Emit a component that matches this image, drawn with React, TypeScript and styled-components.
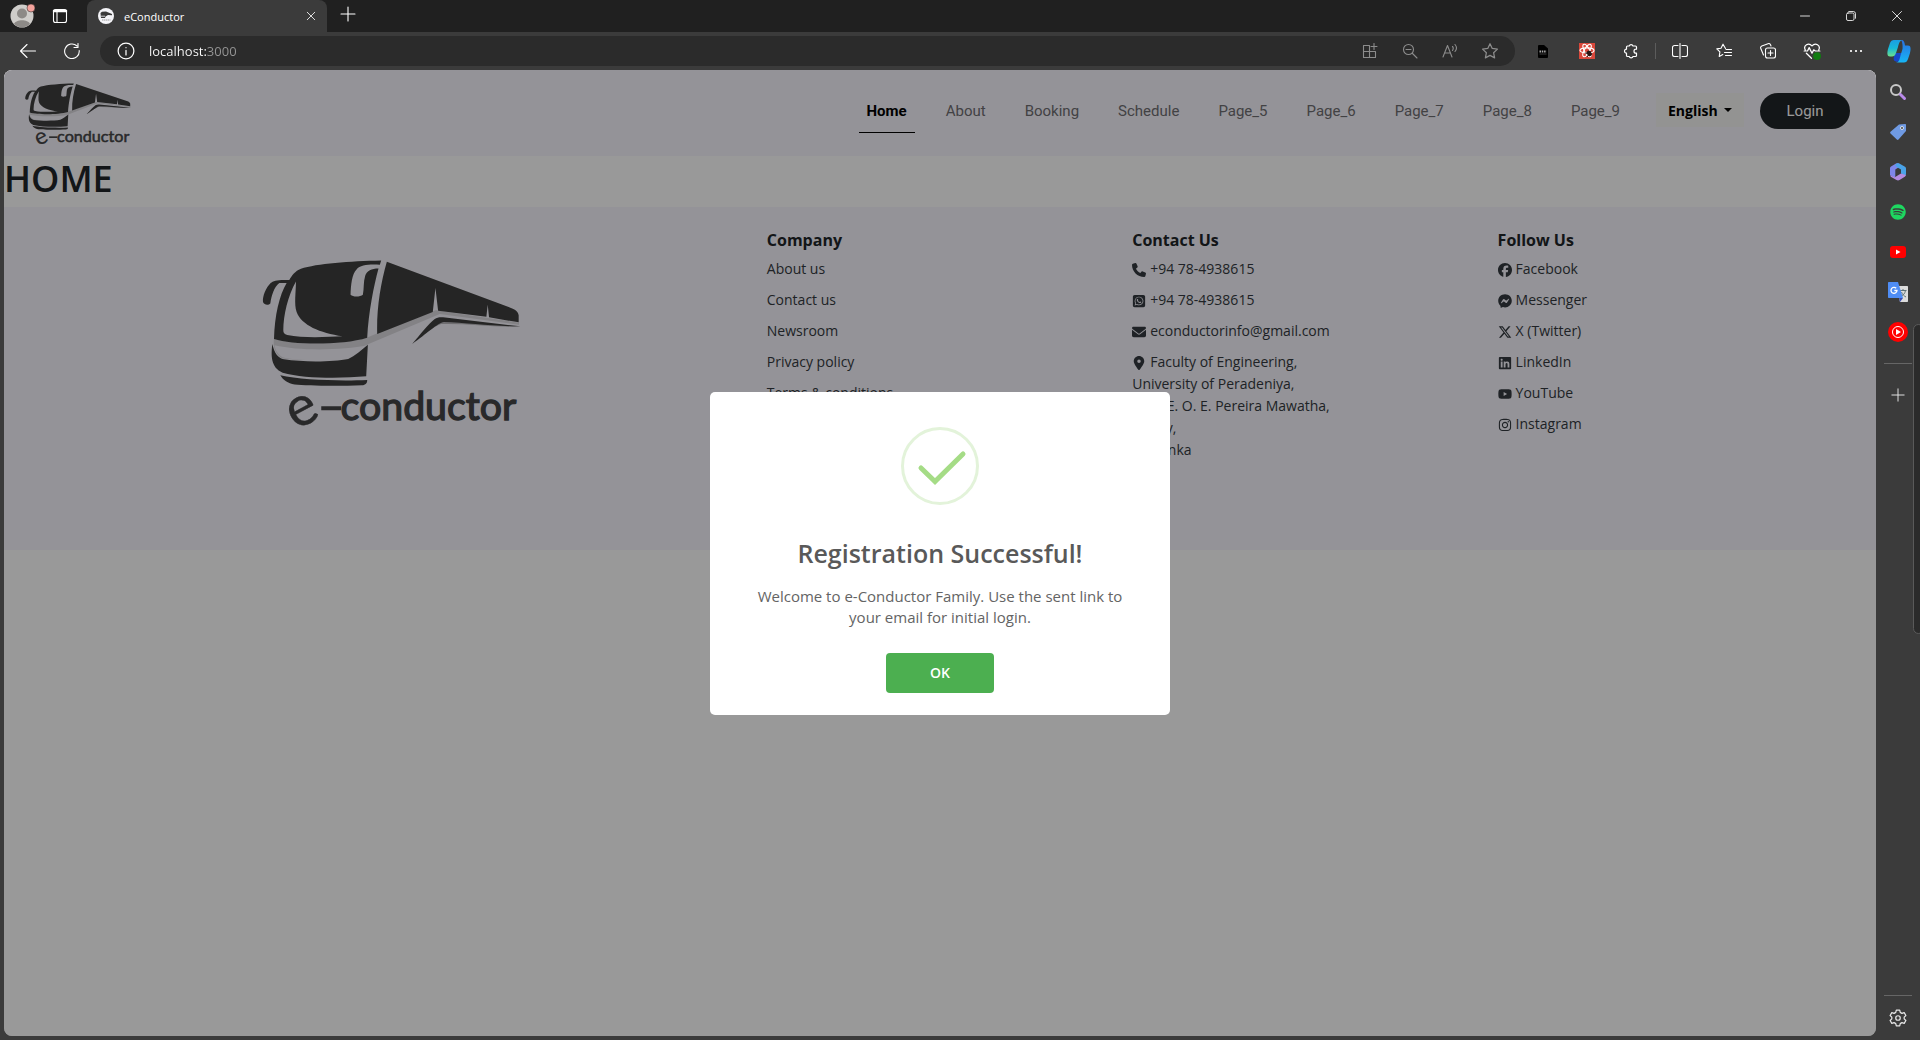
import React from "react";
import styled, { createGlobalStyle } from "styled-components";
import {
  FaPhone, FaSquareWhatsapp, FaEnvelope, FaLocationDot, FaFacebook, FaFacebookMessenger,
  FaXTwitter, FaLinkedin, FaYoutube, FaInstagram, FaSpotify,
} from "react-icons/fa6";

const segoe = `"Open Sans", "Noto Sans", sans-serif`;

const GlobalStyle = createGlobalStyle`
  *, *::before, *::after { box-sizing: border-box; }
  body { margin: 0; background: #3b3b3b; font-family: ${segoe}; }
  button, input, select { font: inherit; }
  h1, h2, h3, p, ul { margin: 0; padding: 0; }
  ul { list-style: none; }
`;

/* ---------- browser chrome ---------- */

const Browser = styled.div`
  display: flex;
  flex-direction: column;
  height: 100vh;
  background: #3b3b3b;
  color: #fff;
`;

const TitleBar = styled.header`
  display: flex;
  height: 32px;
  background: #202020;
`;

const TitleStart = styled.div`
  display: flex;
  align-items: center;
  gap: 15px;
  width: 87px;
  padding-left: 10px;
`;

const IconButton = styled.button<{ $w?: number; $tone?: string }>`
  display: flex;
  align-items: center;
  justify-content: center;
  width: ${(p) => p.$w ?? 44}px;
  height: 28px;
  padding: 0;
  border: 0;
  background: none;
  color: ${(p) => p.$tone ?? "#fff"};
  flex-shrink: 0;
`;

const Tab = styled.div`
  display: flex;
  align-items: center;
  width: 240px;
  height: 32px;
  padding: 0 4px 0 11px;
  gap: 10px;
  background: #3b3b3b;
  border-radius: 8px 8px 0 0;
  font-size: 11px;
`;

const TabTitle = styled.span`
  flex: 1;
`;

const WindowButtons = styled.div`
  display: flex;
  align-items: center;
  margin-left: auto;
`;

const Toolbar = styled.div`
  display: flex;
  align-items: center;
  height: 38px;
  padding-left: 6px;
`;

const AddressBar = styled.div`
  display: flex;
  align-items: center;
  flex: 1;
  height: 30px;
  margin: 0 6px;
  padding: 0 5px 0 4px;
  border-radius: 15px;
  background: #2b2b2b;
`;

const UrlInput = styled.input`
  flex: 1;
  min-width: 0;
  padding: 0 0 0 1px;
  border: 0;
  outline: 0;
  font-size: 13px;
  color: transparent;
  background: linear-gradient(90deg, #fff 58px, #969696 58px);
  background-clip: text;
  -webkit-background-clip: text;
`;

const ToolDivider = styled.span`
  width: 1px;
  height: 16px;
  margin: 0 2px;
  background: #5c5c5c;
`;

const Body = styled.div`
  display: flex;
  flex: 1;
  min-height: 0;
`;

const Sidebar = styled.aside`
  position: relative;
  display: flex;
  flex-direction: column;
  align-items: center;
  width: 44px;
  padding-top: 2px;
  overflow: hidden;
`;

const SideButton = styled(IconButton)`
  height: 40px;
  color: #e6e6e6;
`;

const SideRule = styled.hr<{ $bottom?: boolean }>`
  width: 28px;
  height: 1px;
  margin: ${(p) => (p.$bottom ? "auto 0 0" : "11px 0")};
  border: 0;
  background: #666;
`;

const SettingsButton = styled(SideButton)`
  height: 44px;
`;

/* Edge drawer that peeks over the sidebar. */
const Drawer = styled.div`
  position: absolute;
  top: 254px;
  right: -4px;
  width: 11px;
  height: 310px;
  border: 1px solid #5a5a5a;
  border-radius: 8px;
  background: #2b2b2b;
`;

/* ---------- web page ---------- */

const Page = styled.main`
  position: relative;
  flex: 1;
  margin: 0 0 4px 4px;
  border-radius: 8px;
  background: #fff;
  color: #212529;
  overflow: hidden;
`;

const Navbar = styled.nav`
  display: flex;
  align-items: flex-start;
  height: 86px;
  padding: 0 26px 0 20px;
  background: #f7f5fd;
`;

const Brand = styled.a`
  margin: 12px auto 0 0;
`;

const NavLinks = styled.ul`
  display: flex;
  gap: 23px;
  padding-top: 23px;
`;

const NavLink = styled.a<{ $active?: boolean }>`
  display: block;
  padding: 6px 8px 9px;
  border-bottom: 1px solid ${(p) => (p.$active ? "#000" : "transparent")};
  color: ${(p) => (p.$active ? "#000" : "#6f6e72")};
  font: ${(p) => (p.$active ? 700 : 400)} 15px/24px Roboto, sans-serif;
  text-decoration: none;
`;

const Language = styled.label`
  display: flex;
  align-items: center;
  gap: 6px;
  height: 34px;
  margin: 23px 16px 0 28px;
  padding: 0 12px;
  background: #f6f6f3;
  color: #000;
  &::after {
    content: "";
    border: 4px solid transparent;
    border-top-color: currentColor;
    border-bottom: 0;
  }
`;

const LanguageSelect = styled.select`
  appearance: none;
  padding: 0;
  border: 0;
  background: none;
  color: inherit;
  font-size: 14px;
  font-weight: 700;
`;

const LoginButton = styled.button`
  width: 90px;
  height: 36px;
  margin-top: 23px;
  border: 0;
  border-radius: 18px;
  background: #212529;
  color: #fff;
  font: 400 15px Roboto, sans-serif;
`;

const PageTitle = styled.h1`
  padding-bottom: 6px;
  font-size: 36px;
  font-weight: 600;
  line-height: 45px;
`;

const Footer = styled.footer`
  display: grid;
  grid-template-columns: 2fr 1fr 1fr 1fr;
  min-height: 343px;
  padding: 20px 25px 0 20px;
  background: #f7f5fd;
`;

const FooterLogo = styled.div`
  display: flex;
  justify-content: center;
  padding: 30px 0 0 4px;
`;

const FooterColumn = styled.section`
  padding: 0 12px;
`;

const FooterHeading = styled.h2`
  margin-bottom: 5px;
  font-size: 16px;
  font-weight: 700;
  line-height: 26px;
`;

const FooterList = styled.ul`
  display: flex;
  flex-direction: column;
  gap: 9px;
  color: #343a40;
  font-size: 14px;
  line-height: 22px;
  svg { width: 14px; height: 14px; vertical-align: -3px; margin-right: 4px; }
`;

const FooterLink = styled.a`
  color: inherit;
  text-decoration: none;
`;

const Overlay = styled.div`
  position: absolute;
  inset: 0;
  display: flex;
  align-items: center;
  justify-content: center;
  background: rgba(0, 0, 0, 0.4);
`;

const Dialog = styled.div`
  display: flex;
  flex-direction: column;
  align-items: center;
  width: 460px;
  padding: 35px 32px 22px;
  border-radius: 5px;
  background: #fff;
  text-align: center;
`;

const DialogTitle = styled.h2`
  margin-top: 30px;
  color: #595959;
  font-size: 25px;
  font-weight: 600;
  line-height: 36px;
`;

const DialogText = styled.p`
  margin: 15px 0 25px;
  color: #646464;
  font-size: 15px;
  line-height: 21px;
`;

const OkButton = styled.button`
  width: 108px;
  height: 40px;
  border: 0;
  border-radius: 4px;
  background: #4caf50;
  color: #fff;
  font-size: 14px;
  font-weight: 600;
`;

/* ---------- drawings ---------- */

const Line = ({ size = 16, children }: { size?: number; children: React.ReactNode }) => (
  <svg width={size} height={size} viewBox="0 0 16 16" fill="none" stroke="currentColor" strokeWidth="1.1" strokeLinecap="round" strokeLinejoin="round" aria-hidden="true">
    {children}
  </svg>
);

const BusShape = () => (
  <>
    <path fill="#dad9de" d="M102 311C170 330 320 330 388 304L412 294L588 225L838 262L838 268L600 236L388 325L340 350C300 375 170 378 125 368C108 358 98 335 102 311Z" />
    <path fill="#f7f5fd" d="M104 330C180 348 310 345 382 330L325 367C280 378 165 378 128 366C114 358 105 345 104 330Z" />
    <path fill="#3f3f3f" d="M424 75C330 77 230 84 183 100C165 107 156 120 148 134C118 132 100 135 92 143C78 157 67 182 69 200C73 210 86 210 91 204C95 180 102 155 118 143L140 143C118 180 104 240 102 311C160 330 310 330 382 307C386 230 402 150 416 99C395 99 381 106 376 121C370 140 373 160 369 178C362 184 340 186 332 178C333 150 336 115 350 102C361 88 390 86 420 88Z" />
    <path fill="#f7f5fd" d="M168 138C144 180 130 240 130 284C130 293 133 297 142 299C190 309 260 305 308 303C240 293 185 270 170 230C162 205 168 170 168 138Z" />
    <path fill="#3f3f3f" d="M441 79L812 217C828 222 836 230 837 240V261L748 246L744 208L740 244L595 226L587 158L579 230L412 296C410 220 422 145 441 79Z" />
    <path fill="#3f3f3f" d="M97 326C104 357 115 368 132 372C190 381 280 380 325 371C345 362 365 344 384 328L379 423C300 430 190 430 128 412C92 397 93 360 97 326Z" />
    <path fill="#3f3f3f" d="M121 420C180 434 300 438 382 434C382 444 378 449 366 450C300 453 200 452 164 448C143 443 130 436 121 420Z" />
    <path fill="#b9b8bd" d="M517 326C550 298 580 275 604 266C680 264 760 275 842 275L640 252L600 250Z" />
    <path fill="#3f3f3f" d="M517 326C540 299 567 265 585 251C592 246 600 245 610 246L842 273C760 273 680 262 612 260C595 262 560 296 517 326Z" />
  </>
);

const LogoSvg = styled.svg`
  display: block;
  overflow: visible;
`;

/* The navbar version has a shorter bus above the same wordmark. */
const BusLogo = ({ width, flat }: { width: number; flat?: boolean }) => {
  const h = flat ? 460 : 510;
  const base = flat ? 502 : 553;
  return (
    <LogoSvg width={width} height={Math.round((width * h) / 790)} viewBox={`60 65 790 ${h}`} role="img" aria-label="e-conductor logo">
      <g transform={flat ? "translate(0 7.5) scale(1 .9)" : undefined}><BusShape /></g>
      <g fill="#454547" stroke="#454547" fontFamily="Lato, sans-serif" fontWeight="400">
        <text x="187" y={base + 17} fontSize="168" strokeWidth="1" textAnchor="middle" transform={`rotate(-28 187 ${base - 26})`}>e</text>
        <text x="302" y={base} fontSize="118" strokeWidth="4">conductor</text>
      </g>
      <rect x="244" y={base - 40} width="60" height="12" fill="#454547" />
    </LogoSvg>
  );
};

const Avatar = () => (
  <svg width="26" height="26" viewBox="0 0 26 26" aria-hidden="true">
    <circle cx="12" cy="13" r="11.5" fill="#cfcdca" />
    <circle cx="12" cy="10.5" r="5" fill="#8d8a87" />
    <path d="M4 21c2-5 14-5 16 0a11.5 11.5 0 0 1-16 0z" fill="#8d8a87" />
    <circle cx="21" cy="5" r="4" fill="#f4a29c" stroke="#202020" strokeWidth=".5" />
  </svg>
);

const Favicon = () => (
  <svg width="16" height="16" viewBox="0 0 16 16" aria-hidden="true">
    <circle cx="8" cy="8" r="8" fill="#f4f4f8" />
    <path d="M2.500 5L4 3.800L8 3.500L14 6V7.200L10 7L7.500 8.500L7 10H3Z" fill="#3a3a3a" />
    <path d="M3 8.200H7" stroke="#f4f4f8" strokeWidth=".8" />
    <path d="M4 12H12.500" stroke="#999" strokeWidth="1.200" strokeDasharray="1.500 .5" />
  </svg>
);

const Copilot = () => (
  <svg width="24" height="24" viewBox="0 0 24 24" aria-hidden="true">
    <defs>
      <linearGradient id="cpA" x1="0" y1="0" x2="0" y2="1"><stop offset="0" stopColor="#1b9de2" /><stop offset=".5" stopColor="#17b8d8" /><stop offset="1" stopColor="#6fe08a" /></linearGradient>
      <linearGradient id="cpB" x1="0" y1="0" x2="0" y2="1"><stop offset="0" stopColor="#2a6fe0" /><stop offset="1" stopColor="#17b6f5" /></linearGradient>
    </defs>
    <path d="M8 22c-2 0-1.500-4 0-8h7l-2 7c-.500 2-3 2.500-5 1z" fill="#1746c8" />
    <path d="M7 1h9c-3 0-4 3-5 7l-2 6c-.800 2.500-2 3.500-4 3.500H3C0 17.500 0 14 1 10l2-6c.800-2 2-3 4-3z" fill="url(#cpA)" />
    <path d="M14 1c3 0 3.500 2 4 5.500h3c3 0 3 3.500 2 7.500l-2 6c-.800 2.500-2 3.500-4 3.500H9c3 0 3.500-3 4.500-7l2-6.500C16 6 15 2 14 1z" fill="url(#cpB)" />
  </svg>
);

const M365 = () => (
  <svg width="18" height="18" viewBox="0 0 18 18" aria-hidden="true">
    <path d="M7 .500L2 3.500C1.300 4 1 4.500 1 5.300V12l3.500 2.300c1 .500 1.800 0 1.800-1V6.500L11 3.500V1.500C10 .300 8.500-.200 7 .500z" fill="#7f86ea" />
    <path d="M9 .300c1 0 1.700.300 2.200.600L16 3.700c.700.500 1 1 1 1.800V11c0 1.500-1 2.300-2 1.500L12 10.500V6.500L6.500 3.300V1.800C7 1 8 .300 9 .300z" fill="#4aa3e8" />
    <path d="M1.200 12.300l4.500 2L12 10.500l4.800 1.500c0 .800-.400 1.300-1 1.700l-5.300 3.300c-1 .600-2 .600-3 0L2.200 14c-.600-.400-1-1-1-1.700z" fill="#b48be0" />
  </svg>
);

const Translate = () => (
  <svg width="20" height="20" viewBox="0 0 20 20" aria-hidden="true">
    <path d="M8 4h11c.600 0 1 .400 1 1v14c0 .600-.400 1-1 1h-7z" fill="#dcdcdc" />
    <path d="M12 8.500h6.500M15 7v1.500M17.500 8.500c-.500 3-2.500 5-4.500 6M13.500 10c1 2.500 2.500 4 4.500 5" stroke="#5f7377" fill="none" />
    <path d="M11 16l1 4 3-4z" fill="#3a4db0" />
    <path d="M1 0h9l5 16H1c-.600 0-1-.400-1-1V1c0-.600.400-1 1-1z" fill="#4f8df5" />
    <path d="M8.200 6.300A3 3 0 1 0 9 8.500H6.300" stroke="#fff" strokeWidth="1.300" fill="none" />
  </svg>
);

const STAR = "M8 1.500l2 4.200 4.600.6-3.400 3.200.9 4.600L8 11.900l-4.100 2.200.9-4.600L1.400 6.300 6 5.700z";

const companyLinks = ["About us", "Contact us", "Newsroom", "Privacy policy", "Terms & conditions"];
const socialLinks: [React.ComponentType, string][] = [
  [FaFacebook, "Facebook"],
  [FaFacebookMessenger, "Messenger"],
  [FaXTwitter, "X (Twitter)"],
  [FaLinkedin, "LinkedIn"],
  [FaYoutube, "YouTube"],
  [FaInstagram, "Instagram"],
];
const navItems = ["Home", "About", "Booking", "Schedule", "Page_5", "Page_6", "Page_7", "Page_8", "Page_9"];

export default function App() {
  return (
    <Browser>
      <GlobalStyle />
      <TitleBar>
        <TitleStart>
          <IconButton $w={26} aria-label="Profile"><Avatar /></IconButton>
          <IconButton $w={18} aria-label="Workspaces">
            <Line><rect x="1.500" y="1.500" width="13" height="13" rx="2" /><path d="M1.500 3.500h13M5 4v10" /><path d="M2 3h12" strokeWidth="2.500" /></Line>
          </IconButton>
        </TitleStart>
        <Tab>
          <Favicon />
          <TabTitle>eConductor</TabTitle>
          <IconButton $w={24} aria-label="Close tab"><Line size={12}><path d="M3 3l10 10M13 3L3 13" /></Line></IconButton>
        </Tab>
        <IconButton $w={42} aria-label="New tab"><Line><path d="M8 1v14M1 8h14" /></Line></IconButton>
        <WindowButtons>
          <IconButton $w={46} aria-label="Minimize"><Line size={12}><path d="M2 8h12" /></Line></IconButton>
          <IconButton $w={46} aria-label="Restore"><Line size={12}><rect x="2" y="4" width="10" height="10" rx="2" /><path d="M5 2h6a3 3 0 0 1 3 3v6" /></Line></IconButton>
          <IconButton $w={46} aria-label="Close"><Line size={12}><path d="M2 2l12 12M14 2L2 14" /></Line></IconButton>
        </WindowButtons>
      </TitleBar>

      <Toolbar>
        <IconButton aria-label="Back"><Line><path d="M15.500 8H.500M7 1.500L.500 8l6.500 6.500" /></Line></IconButton>
        <IconButton aria-label="Refresh"><Line><path d="M15.200 7.500A7.300 7.300 0 1 1 13 3M14 .500V4.500H10" /></Line></IconButton>
        <AddressBar>
          <IconButton aria-label="Site information"><Line size={18}><circle cx="8" cy="8" r="7" /><path d="M8 7.500v4M8 5v.100" /></Line></IconButton>
          <UrlInput aria-label="Address" defaultValue="localhost:3000" />
          <IconButton $w={40} $tone="#8c8c8c" aria-label="Apps"><Line><path d="M1.500 2.500h6v12h-6zM1.500 8.500h12v6h-6M12 .500v6M9 3.500h6" /></Line></IconButton>
          <IconButton $w={40} $tone="#8c8c8c" aria-label="Zoom out"><Line><circle cx="6.500" cy="6.500" r="5" /><path d="M4 6.500h5M10.500 10.500l4.500 4.500" /></Line></IconButton>
          <IconButton $w={40} $tone="#8c8c8c" aria-label="Read aloud"><Line><path d="M1 14L5.500 2.500 10 14M2.500 10h6M10.500 3.500q1.500 1.500 0 4M13 1.500q3 3.500 0 7" /></Line></IconButton>
          <IconButton $w={40} $tone="#8c8c8c" aria-label="Add to favorites"><Line size={18}><path d={STAR} /></Line></IconButton>
        </AddressBar>
        <IconButton aria-label="PDF extension">
          <svg width="10" height="13" viewBox="0 0 10 13" aria-hidden="true"><path d="M1 0h5l4 3.500V12a1 1 0 0 1-1 1H1a1 1 0 0 1-1-1V1a1 1 0 0 1 1-1z" fill="#000" /><path d="M1.500 6.500h7" stroke="#aaa" strokeWidth="2" strokeDasharray="1.500 .8" /><path d="M1.500 9h7" stroke="#666" strokeWidth=".6" /></svg>
        </IconButton>
        <IconButton aria-label="React extension">
          <svg width="16" height="16" viewBox="0 0 16 16" aria-hidden="true"><path d="M0 0h16v16H0z" fill="#d9483b" /><g fill="none" stroke="#fff" strokeWidth="1.100"><ellipse cx="8" cy="7.500" rx="7" ry="2.600" /><ellipse cx="8" cy="7.500" rx="7" ry="2.600" transform="rotate(60 8 7.500)" /><ellipse cx="8" cy="7.500" rx="7" ry="2.600" transform="rotate(120 8 7.500)" /></g><ellipse cx="10" cy="10.500" rx="2.200" ry="3" fill="#2a1614" transform="rotate(-35 10 10)" /><path d="M6 10l7 1M8 14l4-6" stroke="#2a1614" /></svg>
        </IconButton>
        <IconButton aria-label="Extensions"><Line><path d="M4.500 3h1.700a2 2 0 0 1 3.800 0h2.500a1 1 0 0 1 1 1v2.200h-.500a2 2 0 0 0 0 4h.500v2.300a1 1 0 0 1-1 1H10a2 2 0 0 1-3.800 0H4.500a1 1 0 0 1-1-1V10.200a2 2 0 0 1 0-4V4a1 1 0 0 1 1-1z" strokeWidth="1.200" /></Line></IconButton>
        <ToolDivider />
        <IconButton aria-label="Split screen"><Line><path d="M8 .500v15M6 2.500H2.500a2 2 0 0 0-2 2v7a2 2 0 0 0 2 2H6M10 2.500h3.500a2 2 0 0 1 2 2v7a2 2 0 0 1-2 2H10" /></Line></IconButton>
        <IconButton aria-label="Favorites"><Line><path d="M9.500 5.500L7 1.200 5 5.200.800 5.900l3.100 3-.700 4.600 3.600-2M10 6.500h5.500M8.500 9.500h7M9.500 12.500h6" /></Line></IconButton>
        <IconButton aria-label="Collections"><Line><rect x="5.500" y="5" width="10" height="10" rx="2" /><path d="M10.500 7.500v5M8 10h5M3.500 12L.800 5.500a2 2 0 0 1 1-2.600L8 .700a2 2 0 0 1 2.500 1.100l.5 1.200" /></Line></IconButton>
        <IconButton aria-label="Browser essentials">
          <Line size={18}><path d="M2 7C0 3 5 0 8 3.500 11 0 16 3 14 7M1 8h3l1.500-3 2.500 5 1.500-3L11 8h4M3 10l4.500 4.500" /><circle cx="12.500" cy="12.500" r="3.500" fill="#107c10" stroke="none" /></Line>
        </IconButton>
        <IconButton aria-label="Settings and more"><Line><path d="M3 8h.010M8 8h.010M13 8h.010" strokeWidth="2.200" /></Line></IconButton>
        <IconButton $w={42} aria-label="Copilot"><Copilot /></IconButton>
      </Toolbar>

      <Body>
        <Page>
          <Navbar>
            <Brand href="#home"><BusLogo width={108} flat /></Brand>
            <NavLinks>
              {navItems.map((name, i) => (
                <li key={name}><NavLink href={`#${name.toLowerCase()}`} $active={i === 0}>{name}</NavLink></li>
              ))}
            </NavLinks>
            <Language>
              <LanguageSelect aria-label="Language" defaultValue="English"><option>English</option></LanguageSelect>
            </Language>
            <LoginButton>Login</LoginButton>
          </Navbar>
          <PageTitle>HOME</PageTitle>
          <Footer>
            <FooterLogo><BusLogo width={263} /></FooterLogo>
            <FooterColumn>
              <FooterHeading>Company</FooterHeading>
              <FooterList>
                {companyLinks.map((t) => <li key={t}><FooterLink href="#company">{t}</FooterLink></li>)}
              </FooterList>
            </FooterColumn>
            <FooterColumn>
              <FooterHeading>Contact Us</FooterHeading>
              <FooterList>
                <li><FaPhone />+94 78-4938615</li>
                <li><FaSquareWhatsapp />+94 78-4938615</li>
                <li><FaEnvelope />econductorinfo@gmail.com</li>
                <li><FaLocationDot />Faculty of Engineering,<br />University of Peradeniya,<br />Prof. E. O. E. Pereira Mawatha,<br />Kandy,<br />Sri Lanka</li>
              </FooterList>
            </FooterColumn>
            <FooterColumn>
              <FooterHeading>Follow Us</FooterHeading>
              <FooterList>
                {socialLinks.map(([Icon, t]) => <li key={t}><FooterLink href="#social"><Icon />{t}</FooterLink></li>)}
              </FooterList>
            </FooterColumn>
          </Footer>

          <Overlay>
            <Dialog role="dialog" aria-modal="true" aria-labelledby="dialog-title">
              <svg width="78" height="78" viewBox="0 0 78 78" fill="none" aria-hidden="true">
                <circle cx="39" cy="39" r="37.500" stroke="#e3f3da" strokeWidth="3" />
                <path d="M20 41L34 54.500L62 27" stroke="#a5dc86" strokeWidth="5" strokeLinecap="round" />
              </svg>
              <DialogTitle id="dialog-title">Registration Successful!</DialogTitle>
              <DialogText>Welcome to e-Conductor Family. Use the sent link to your email for initial login.</DialogText>
              <OkButton>OK</OkButton>
            </Dialog>
          </Overlay>
        </Page>

        <Sidebar>
          <SideButton aria-label="Search"><svg width="18" height="18" viewBox="0 0 18 18" fill="none" aria-hidden="true"><circle cx="7" cy="7" r="5" stroke="#c8c8c8" strokeWidth="2" /><path d="M11.500 11.500l4 4" stroke="#b98aea" strokeWidth="3" strokeLinecap="round" /></svg></SideButton>
          <SideButton aria-label="Shopping"><svg width="18" height="18" viewBox="0 0 18 18" aria-hidden="true"><path d="M10 1.500L16 1c.600 0 1 .400 1 1v6L9.500 16.500c-.500.500-1.200.500-1.700 0L1.500 10.500c-.500-.500-.500-1.200 0-1.700z" fill="#6f9ae3" /><circle cx="13" cy="5" r="1.500" fill="#3b3b3b" stroke="#dde6f5" /></svg></SideButton>
          <SideButton aria-label="Microsoft 365"><M365 /></SideButton>
          <SideButton aria-label="Spotify"><FaSpotify size={16} color="#1ed760" /></SideButton>
          <SideButton aria-label="YouTube"><svg width="16" height="12" viewBox="0 0 16 12" aria-hidden="true"><rect width="16" height="12" rx="3" fill="#f00" /><path d="M6 3.500v5L10.500 6z" fill="#fff" /></svg></SideButton>
          <SideButton aria-label="Google Translate"><Translate /></SideButton>
          <SideButton aria-label="YouTube Music"><svg width="20" height="20" viewBox="0 0 20 20" aria-hidden="true"><circle cx="10" cy="10" r="10" fill="#f00" /><circle cx="10" cy="10" r="5.500" fill="none" stroke="#fff" /><path d="M8 7v6l5-3z" fill="#fff" /></svg></SideButton>
          <SideRule />
          <SideButton aria-label="Add to sidebar"><Line size={14}><path d="M8 1v14M1 8h14" /></Line></SideButton>
          <SideRule $bottom />
          <SettingsButton aria-label="Settings"><Line size={18}><circle cx="8" cy="8" r="2" /><path d="M6.500 1h3l.500 2 1.500.900 2-.700 1.500 2.600-1.500 1.400v1.600l1.500 1.400-1.500 2.600-2-.700-1.500.900-.500 2h-3l-.500-2-1.500-.900-2 .700L1 10.200l1.500-1.400V7.200L1 5.800l1.500-2.600 2 .700L6 3z" /></Line></SettingsButton>
          <Drawer />
        </Sidebar>
      </Body>
    </Browser>
  );
}
